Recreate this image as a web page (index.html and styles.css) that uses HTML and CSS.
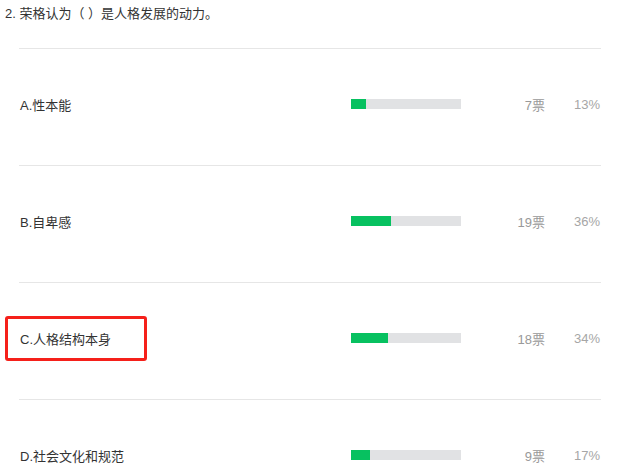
FILE: index.html
```html
<!DOCTYPE html>
<html lang="zh-CN">
<head>
  <meta charset="UTF-8" />
  <meta name="viewport" content="width=device-width, initial-scale=1.0"/>
  <title>投票结果</title>
  <link rel="stylesheet" href="styles.css">
</head>
<body>
  <div class="question">2. 荣格认为（ ）是人格发展的动力。</div>
  <div class="options">
    <div class="option">
      <div class="label">A.性本能</div>
      <div class="bar"><div class="fill" style="width: 13.6%"></div></div>
      <div class="votes">7票</div>
      <div class="percent">13%</div>
    </div>
    <div class="option">
      <div class="label">B.自卑感</div>
      <div class="bar"><div class="fill" style="width: 36%"></div></div>
      <div class="votes">19票</div>
      <div class="percent">36%</div>
    </div>
    <div class="option">
      <div class="label marked">C.人格结构本身</div>
      <div class="bar"><div class="fill" style="width: 34%"></div></div>
      <div class="votes">18票</div>
      <div class="percent">34%</div>
    </div>
    <div class="option">
      <div class="label">D.社会文化和规范</div>
      <div class="bar"><div class="fill" style="width: 17%"></div></div>
      <div class="votes">9票</div>
      <div class="percent">17%</div>
    </div>
  </div>
</body>
</html>
```

FILE: styles.css
```css
body {
  margin: 0;
  font-family: "Liberation Sans", "Noto Sans CJK SC", sans-serif;
  font-size: 13px;
  color: #333;
  background-color: #fff;
}

.question {
  height: 48px;
  padding: 6px 5px 0;
  box-sizing: border-box;
  line-height: 16px;
}

.options {
  margin-left: 19px;
  width: 582px;
}

.option {
  display: flex;
  align-items: center;
  box-sizing: border-box;
  height: 117px;
  padding-bottom: 6px;
  border-top: 1px solid #e6e6e6;
}

.label {
  flex: 1;
  padding-left: 1px;
  position: relative;
}

/* red annotation box around the right answer */
.label.marked::before {
  content: "";
  position: absolute;
  left: -14px;
  top: -13px;
  width: 136px;
  height: 39px;
  border: 3px solid #f5201a;
  border-radius: 3px;
}

.bar {
  width: 110px;
  height: 10px;
  background-color: #e1e2e4;
}

.fill {
  height: 100%;
  background-color: #07c160;
}

.votes {
  width: 84px;
  text-align: right;
  color: #999;
}

.percent {
  width: 55px;
  padding-right: 1px;
  text-align: right;
  color: #a6a6a6;
}
```
